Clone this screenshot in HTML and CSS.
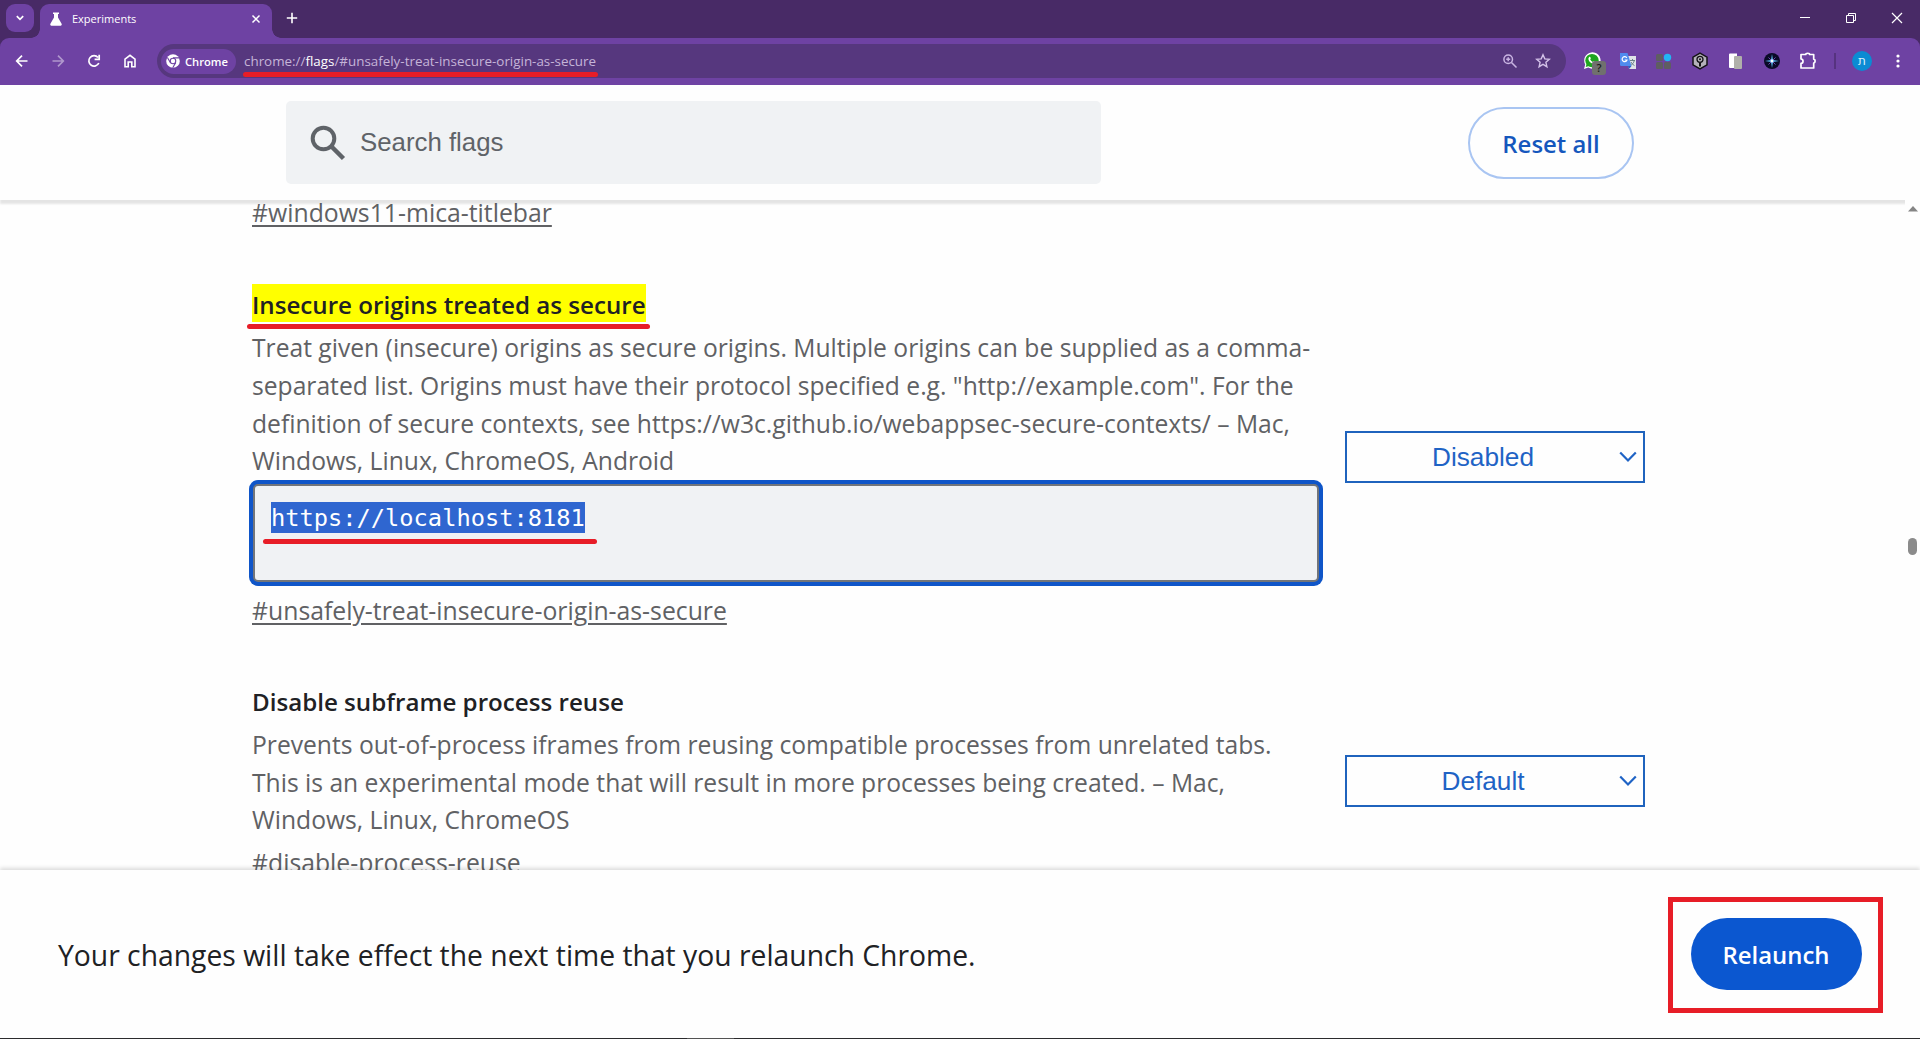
FILE: index.html
```html
<!DOCTYPE html>
<html lang="en">
<head>
<meta charset="utf-8">
<title>Experiments</title>
<link rel="stylesheet" href="styles.css">
</head>
<body>
<div class="window">
  <div class="tabstrip">
    <div class="tab-search"><svg width="10" height="10" viewBox="0 0 10 10"><path d="M1.8 3.2 5 6.4 8.200 3.200" fill="none" stroke="#fff" stroke-width="1.7"/></svg></div>
    <div class="tab">
      <svg class="flask" width="12" height="14" viewBox="0 0 12 14"><path d="M3 .5h6v1.600H8v3.400l3.600 6.300c.5 1-.1 1.900-1 1.900H1.400c-.9 0-1.500-.9-1-1.900L4 5.500V2.100H3z" fill="#fff"/></svg>
      <span class="tab-title">Experiments</span>
      <svg width="10" height="10" viewBox="0 0 10 10"><path d="M1.500 1.500l7 7M8.500 1.500l-7 7" stroke="#fff" stroke-width="1.500"/></svg>
    </div>
    <svg class="new-tab" width="12" height="12" viewBox="0 0 12 12"><path d="M6 .8v10.400M.8 6h10.400" stroke="#fff" stroke-width="1.600"/></svg>
    <div class="caption">
      <svg width="12" height="12" viewBox="0 0 12 12"><path d="M1 5.500h10" stroke="#fff"/></svg>
      <svg width="12" height="12" viewBox="0 0 12 12"><path d="M1.500 3.500h7v7h-7zM3.500 3.500v-2h7v7h-2" fill="none" stroke="#fff"/></svg>
      <svg width="12" height="12" viewBox="0 0 12 12"><path d="M1 1l10 10M11 1 1 11" stroke="#fff" stroke-width="1.200"/></svg>
    </div>
  </div>
  <div class="toolbar">
    <div class="nav">
      <svg width="16" height="16" viewBox="0 0 16 16"><path d="M13.500 8H3M8 2.700 2.700 8 8 13.300" fill="none" stroke="#fff" stroke-width="1.700"/></svg>
      <svg width="16" height="16" viewBox="0 0 16 16" opacity=".45"><path d="M2.500 8H13M8 2.700 13.300 8 8 13.300" fill="none" stroke="#fff" stroke-width="1.700"/></svg>
      <svg width="16" height="16" viewBox="0 0 16 16"><path d="M12.800 10A5.200 5.200 0 1 1 12 4.500M13.200 1.800v4.600H8.600" fill="none" stroke="#fff" stroke-width="1.700"/></svg>
      <svg width="16" height="16" viewBox="0 0 16 16"><path d="M3 6.200 8 2.300l5 3.900v7.500H9.800V9H6.200v4.700H3z" fill="none" stroke="#fff" stroke-width="1.600"/></svg>
    </div>
    <div class="omnibox">
      <div class="chip">
        <svg width="14" height="14" viewBox="0 0 14 14"><circle cx="7" cy="7" r="6.800" fill="#fff"/><circle cx="7" cy="7" r="3.300" fill="#6e42a3"/><circle cx="7" cy="7" r="2.200" fill="#fff"/><path d="M7 3.900h6M4.300 8.500 1.400 3.400M9.700 8.600l-3 5.100" stroke="#6e42a3" stroke-width="1.100"/></svg>
        <span>Chrome</span>
      </div>
      <div class="url">chrome://<b>flags</b>/#unsafely-treat-insecure-origin-as-secure<i class="mark mark-url"></i></div>
      <svg class="zoom" width="16" height="16" viewBox="0 0 16 16"><circle cx="6.200" cy="6.200" r="4.300" fill="none" stroke="#c9b4e2" stroke-width="1.500"/><path d="M9.500 9.500 14.500 14.500M6.200 4.200v4M4.200 6.200h4" stroke="#c9b4e2" stroke-width="1.500"/></svg>
      <svg width="16" height="16" viewBox="0 0 16 16"><path d="M8 1.800l1.800 4.100 4.500.4-3.400 3 1 4.400L8 11.400l-3.900 2.300 1-4.400-3.400-3 4.500-.4z" fill="none" stroke="#d3c1e8" stroke-width="1.400"/></svg>
    </div>
    <div class="extensions">
      <svg width="24" height="24" viewBox="0 0 24 24"><path d="M4 20l1.200-4.600A8.200 8.200 0 1 1 8.300 18.600z" fill="#fff"/><circle cx="12" cy="11.600" r="6.700" fill="#1fa51f"/><path d="M5.700 18l1-3.500 2.500 2.500z" fill="#1fa51f"/><path d="M9 8.200c.6-.7 1.300-.3 1.500.4l.3 1-.6.9c.6 1.200 1.500 2 2.700 2.500l.8-.9 1.800.9c0 1.600-1.500 2-2.600 1.700-2.300-.6-4.400-2.800-4.500-4.800 0-.8.200-1.300.6-1.700z" fill="#fff"/><rect x="12" y="12" width="14" height="14" rx="3" fill="#70706e"/><text x="19" y="23" class="badge-text">?</text></svg>
      <svg width="24" height="24" viewBox="0 0 24 24"><path d="M11 7h9v13h-7z" fill="#dfe3e8"/><path d="M14 11.500h5M16.500 10v1.500M18.300 11.500c-.5 2.500-2 4-4 5M15 13c.8 1.700 2 2.800 3.500 3.600" fill="none" stroke="#6b8288"/><path d="M4 4h7.500l4 13H5.200Q4 17 4 15.500z" fill="#4f8bee"/><path d="M12 17h3.500L13 20z" fill="#2c5cc0"/><path d="M10.800 8.900A2.500 2.500 0 1 0 11 11H8.700" fill="none" stroke="#fff" stroke-width="1.200"/></svg>
      <svg width="24" height="24" viewBox="0 0 24 24"><g fill="#5f5d62"><rect x="4" y="5" width="7" height="7" rx="1.500"/><rect x="4" y="13" width="7" height="7" rx="1.500"/><rect x="12" y="13" width="7" height="7" rx="1.500"/></g><circle cx="15.500" cy="8.500" r="3.700" fill="#22b6f3"/></svg>
      <svg width="24" height="24" viewBox="0 0 24 24"><path d="M12 4.200l7 3.900v7.800l-7 3.900-7-3.900V8.100z" fill="#b5b2ba" stroke="#151318" stroke-width="1.500"/><circle cx="12" cy="10.300" r="3" fill="none" stroke="#151318" stroke-width="1.300"/><circle cx="12" cy="10.300" r="1" fill="#151318"/><path d="M12 13.500v4" stroke="#151318" stroke-width="2"/></svg>
      <svg width="24" height="24" viewBox="0 0 24 24"><path d="M6 4.500h7v3h-2v11.500H6q-1 0-1-1V5.500q0-1 1-1z" fill="#fff"/><rect x="10" y="7" width="8" height="13" rx="1" fill="#b0b0aa"/></svg>
      <svg width="24" height="24" viewBox="0 0 24 24"><circle cx="12" cy="12" r="8" fill="#0a0a26"/><path d="M12 5l1 6 6 1-6 1-1 6-1-6-6-1 6-1z" fill="#58b7ee"/><path d="M8.500 8.500 15.500 15.500M15.500 8.500 8.500 15.500" stroke="#8a5ad6" stroke-width=".8"/><circle cx="12" cy="12" r="1.400" fill="#fff"/></svg>
      <svg width="24" height="24" viewBox="0 0 24 24"><path d="M5 5.500h4.700c0-1.700 4-1.700 4 0h4v4.700c1.900.2 1.900 3.600 0 3.800v5H5v-4.600c2.700-.2 2.700-4.200 0-4.400z" fill="none" stroke="#fff" stroke-width="1.700" stroke-linejoin="round"/></svg>
    </div>
    <i class="divider"></i>
    <span class="avatar">ת</span>
    <svg class="menu" width="4" height="16" viewBox="0 0 4 16" fill="#fff"><circle cx="2" cy="3" r="1.600"/><circle cx="2" cy="8" r="1.600"/><circle cx="2" cy="13" r="1.600"/></svg>
  </div>

  <header class="header">
    <div class="search">
      <svg width="36" height="36" viewBox="0 0 36 36"><circle cx="13.500" cy="13.500" r="10.800" fill="none" stroke="#5f6368" stroke-width="4"/><path d="M21 21l12.500 12.500" stroke="#5f6368" stroke-width="4.500"/></svg>
      <span>Search flags</span>
    </div>
    <div class="reset">Reset all</div>
  </header>

  <main class="main">
    <div class="list">
      <a class="permalink first">#windows11-mica-titlebar</a>
      <section class="flag flag-origins">
        <div class="info">
          <h2><span class="highlight">Insecure origins treated as secure<i class="mark mark-title"></i></span></h2>
          <p>Treat given (insecure) origins as secure origins. Multiple origins can be supplied as a comma-<br>separated list. Origins must have their protocol specified e.g. "http://example.com". For the<br>definition of secure contexts, see https://w3c.github.io/webappsec-secure-contexts/ – Mac,<br>Windows, Linux, ChromeOS, Android</p>
          <div class="origins"><span class="selected">https://localhost:8181</span><i class="mark mark-origin"></i></div>
          <a class="permalink">#unsafely-treat-insecure-origin-as-secure</a>
        </div>
        <div class="select"><span>Disabled</span><svg width="18" height="12" viewBox="0 0 18 12"><path d="M1.200 1.500 9 9.500l7.800-8" fill="none" stroke="#1f63c5" stroke-width="2.200"/></svg></div>
      </section>
      <section class="flag flag-reuse">
        <div class="info">
          <h2>Disable subframe process reuse</h2>
          <p>Prevents out-of-process iframes from reusing compatible processes from unrelated tabs.<br>This is an experimental mode that will result in more processes being created. – Mac,<br>Windows, Linux, ChromeOS</p>
          <a class="permalink">#disable-process-reuse</a>
        </div>
        <div class="select"><span>Default</span><svg width="18" height="12" viewBox="0 0 18 12"><path d="M1.200 1.500 9 9.500l7.800-8" fill="none" stroke="#1f63c5" stroke-width="2.200"/></svg></div>
      </section>
    </div>
    <div class="scrollbar">
      <svg width="10" height="6" viewBox="0 0 10 6"><path d="M5 0l5 5.500H0z" fill="#858585"/></svg>
      <i class="thumb"></i>
    </div>
  </main>

  <footer class="footer">
    <span class="notice">Your changes will take effect the next time that you relaunch Chrome.</span>
    <div class="callout"><div class="relaunch">Relaunch</div></div>
  </footer>
  <div class="taskbar"><i></i></div>
</div>
</body>
</html>
```
FILE: styles.css
```css
* { box-sizing: border-box; }
body { margin: 0; background: #fefefe; font-family: "Open Sans", "Noto Sans", sans-serif; }
svg { display: block; flex: none; overflow: visible; }
.window { display: flex; flex-direction: column; width: 1920px; height: 1039px; overflow: hidden; background: linear-gradient(#482a66 60px, #fefefe 60px); }

.tabstrip { display: flex; align-items: flex-start; height: 38px; padding-left: 6px; }
.tab-search { display: grid; place-items: center; width: 28px; height: 28px; margin-top: 4px; border-radius: 9px; background: #6e42a3; }
.tab { position: relative; display: flex; align-items: center; width: 232px; height: 34px; margin: 4px 0 0 6px; padding: 0 11px 4px 10px; border-radius: 9px 9px 0 0; background: #6e42a3; }
.tab::before, .tab::after { content: ""; position: absolute; bottom: 0; width: 9px; height: 9px; }
.tab::before { left: -9px; background: radial-gradient(circle at 0 0, transparent 8.5px, #6e42a3 9px); }
.tab::after { right: -9px; background: radial-gradient(circle at 100% 0, transparent 8.5px, #6e42a3 9px); }
.tab-title { flex: 1; margin-left: 10px; color: #fff; font-size: 11px; line-height: 16px; }
.new-tab { margin: 12px 0 0 14px; }
.caption { display: flex; gap: 34px; margin: 12px 17px 0 auto; }

.toolbar { display: flex; align-items: center; height: 47px; padding-bottom: 1px; border-radius: 9px 9px 0 0; background: #6e42a3; }
.nav { display: flex; gap: 20px; margin-left: 14px; }
.omnibox { display: flex; align-items: center; width: 1409px; height: 34px; margin-left: 19px; padding: 0 15px 0 4px; border-radius: 17px; background: #56377e; }
.chip { display: flex; align-items: center; gap: 5px; width: 75px; height: 25px; padding-left: 5px; border-radius: 13px; background: #6e42a3; color: #fff; font-size: 11.200px; font-weight: 600; }
.url { position: relative; margin-left: 8px; color: #c5b4d8; font-size: 13.400px; line-height: 20px; white-space: nowrap; }
.url b { color: #fff; font-weight: 400; }
.zoom { margin: 0 17px 0 auto; }
.extensions { display: flex; gap: 12px; margin-left: 14px; }
.badge-text { fill: #1c1c1c; font-size: 11px; font-weight: 600; text-anchor: middle; }
.divider { width: 2px; height: 16px; margin-left: 14px; background: #56337f; }
.avatar { display: grid; place-items: center; width: 20px; height: 20px; margin-left: 16px; border-radius: 50%; background: #0b8bd3; color: #d9f0fb; font: 12px/20px "DejaVu Sans", sans-serif; }
.menu { margin-left: 24px; }

.mark { position: absolute; height: 5px; border-radius: 2.500px; background: #e71d27; }
.mark-url { left: -1px; width: 355px; top: 21px; }
.mark-title { left: -5px; width: 403px; top: 40px; }
.mark-origin { left: 8px; width: 334px; top: 53px; }

.header { position: relative; z-index: 2; display: flex; flex: none; align-items: center; height: 115px; padding-left: 286px; background: #fefefe; box-shadow: 0 4px 2px rgba(0, 0, 0, .1); }
.search { display: flex; align-items: center; gap: 14px; width: 815px; height: 83px; padding-left: 24px; border-radius: 5px; background: #f0f2f4; color: #5f6368; font: 25.800px/30px "Liberation Sans", sans-serif; }
.search span { padding-bottom: 2px; }
.reset { width: 166px; height: 72px; margin-left: 367px; border: 2px solid #a9c5f2; border-radius: 36px; color: #1557bd; font-size: 23.900px; font-weight: 600; line-height: 70px; text-align: center; }

.main { display: flex; flex: 1; min-height: 0; }
.list { flex: 1; padding-left: 252px; overflow: hidden; }
.permalink { display: block; color: #606164; font-size: 24.780px; line-height: 37.600px; text-decoration: underline; text-decoration-thickness: 2px; text-underline-offset: 3px; white-space: nowrap; }
.first { margin-top: -6px; }
.flag { display: grid; grid-template-columns: 1071px 300px; column-gap: 22px; align-items: center; }
.flag-origins { margin-top: 52.500px; }
.flag-reuse { margin-top: 51.500px; }
h2 { height: 38px; margin: 0 0 7.400px; color: #202124; font-size: 24.150px; font-weight: 600; line-height: 41px; white-space: nowrap; }
.highlight { position: relative; display: inline-block; height: 38px; background: #ff0; }
p { margin: 0; color: #606164; font-size: 24.650px; line-height: 37.600px; white-space: nowrap; }
.origins { position: relative; height: 98px; margin: 4.200px 4px 9.600px 1px; padding: 16px; border: 2px solid #72757a; border-radius: 5px; background: #f0f2f4; box-shadow: 0 0 0 4px #0f55c8; line-height: 31px; }
.selected { display: inline-block; height: 31px; background: #2f66d0; color: #fff; font: 23.700px/32px "DejaVu Sans Mono", monospace; }
.flag-reuse .permalink { margin-top: 5.200px; }
.select { display: flex; align-items: center; height: 52px; padding-right: 7px; border: 2px solid #1f63bd; color: #1f63c5; font: 26.200px/30px "Liberation Sans", sans-serif; }
.select span { flex: 1; text-align: center; }
.select svg { margin-right: -1px; }

.scrollbar { position: relative; z-index: 3; width: 15px; padding: 6px 0 0 3px; background: #fefefe; }
.thumb { display: block; width: 9px; height: 17px; margin-top: 326px; border-radius: 5px; background: #8b8b8b; }

.footer { position: relative; z-index: 4; display: flex; flex: none; align-items: center; justify-content: space-between; height: 168px; padding: 0 37px 0 58px; background: #fefefe; box-shadow: 0 -2px 4px rgba(0, 0, 0, .14); color: #202124; font-size: 28.300px; }
.notice { padding-top: 2px; }
.callout { display: grid; place-items: center; width: 215px; height: 116px; margin-top: 2px; border: 5px solid #e71d27; }
.relaunch { width: 171px; height: 72px; margin: 0 0 2px 1px; border-radius: 36px; background: #0b57d0; color: #fff; font-size: 23.900px; font-weight: 600; line-height: 74px; text-align: center; }
.taskbar { flex: none; height: 1px; background: #2c2c2e; }
.taskbar i { display: block; width: 47px; height: 1px; margin-left: 687px; background: #555; }
```
